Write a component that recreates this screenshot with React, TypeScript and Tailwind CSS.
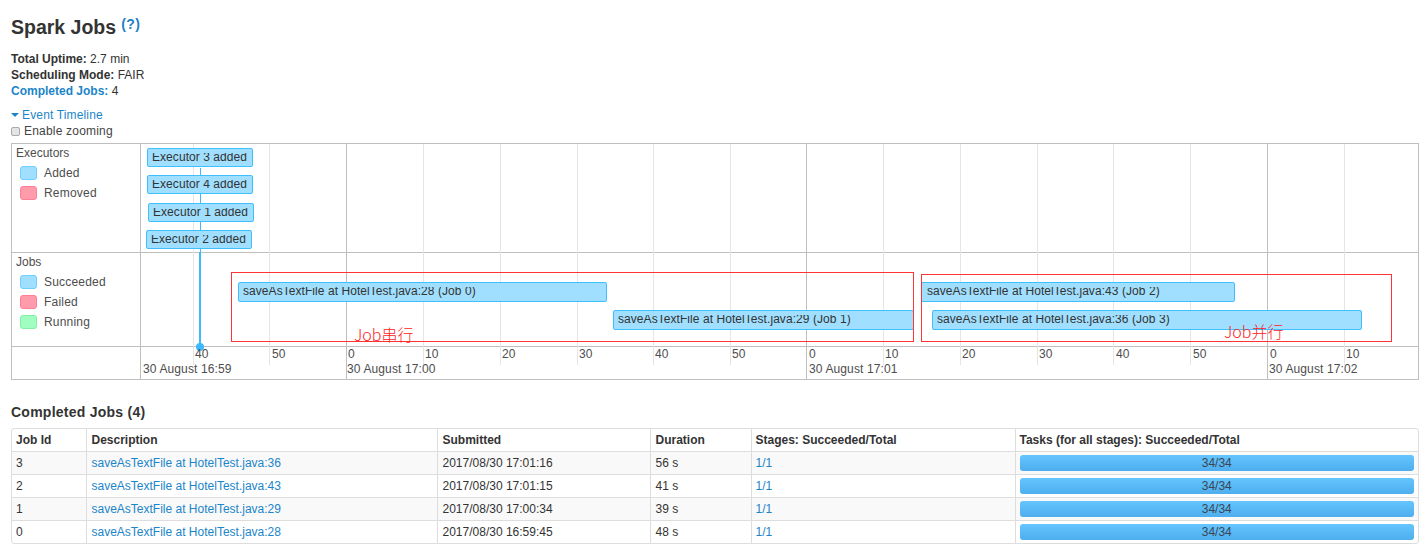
import React from 'react';

const sans = '[font-family:"Liberation_Sans",Arial,sans-serif]';

// canvas origin in the page is x=141, y=144
const OX = 141;
const OY = 144;

const minorLines = [193, 269, 423, 500, 577, 653, 730, 883, 960, 1037, 1113, 1190, 1344];
const majorLines = [346, 806, 1267];

const axisLabels = [
  { x: 195, text: '40' }, { x: 272, text: '50' }, { x: 348, text: '0' }, { x: 425, text: '10' },
  { x: 502, text: '20' }, { x: 579, text: '30' }, { x: 655, text: '40' }, { x: 732, text: '50' },
  { x: 809, text: '0' }, { x: 885, text: '10' }, { x: 962, text: '20' }, { x: 1039, text: '30' },
  { x: 1116, text: '40' }, { x: 1193, text: '50' }, { x: 1270, text: '0' }, { x: 1346, text: '10' },
];

const dateLabels = [
  { x: 143, text: '30 August 16:59' },
  { x: 347, text: '30 August 17:00' },
  { x: 809, text: '30 August 17:01' },
  { x: 1269, text: '30 August 17:02' },
];

const items = [
  { x: 147, y: 148, w: 106, h: 19, pl: 5, text: 'Executor 3 added' },
  { x: 147, y: 175, w: 106, h: 19, pl: 5, text: 'Executor 4 added' },
  { x: 148, y: 203, w: 106, h: 19, pl: 5, text: 'Executor 1 added' },
  { x: 146, y: 230, w: 106, h: 19, pl: 5, text: 'Executor 2 added' },
  { x: 238, y: 282, w: 369, h: 20, pl: 5, text: 'saveAsTextFile at HotelTest.java:28 (Job 0)' },
  { x: 613, y: 310, w: 301, h: 20, pl: 5, text: 'saveAsTextFile at HotelTest.java:29 (Job 1)' },
  { x: 921, y: 282, w: 314, h: 20, pl: 6, text: 'saveAsTextFile at HotelTest.java:43 (Job 2)' },
  { x: 932, y: 310, w: 430, h: 20, pl: 5, text: 'saveAsTextFile at HotelTest.java:36 (Job 3)' },
];

const jobs = [
  { id: 3, line: 36, submitted: '2017/08/30 17:01:16', duration: '56 s' },
  { id: 2, line: 43, submitted: '2017/08/30 17:01:15', duration: '41 s' },
  { id: 1, line: 29, submitted: '2017/08/30 17:00:34', duration: '39 s' },
  { id: 0, line: 28, submitted: '2017/08/30 16:59:45', duration: '48 s' },
];

const LegendRow = ({ label, box }: { label: string; box: string }) => (
  <div className="flex items-center h-[20px] pl-[4px]">
    <span className={`w-[17px] h-[14px] rounded-[3px] border mr-[7px] ${box}`} />
    <span className="tracking-[0.2px]">{label}</span>
  </div>
);

const added = 'bg-[#a0dfff] border-[#6fcfff]';
const removed = 'bg-[#ff9bab] border-[#ff7f96]';
const running = 'bg-[#a0ffc0] border-[#7ff0a4]';

export default function App() {
  return (
    <div className={`${sans} text-[12px] leading-[16px] text-[#333] bg-white w-[1426px] h-[557px] overflow-hidden pl-[11px] pr-[7px]`}>
      <h1 className="pt-[12px] h-[50px] text-[19.5px] leading-[30px] font-bold text-[#333]">
        Spark Jobs
        <sup className="ml-[5px] text-[14px] leading-none tracking-[0.5px] font-semibold text-[#1f7fc4] relative top-[-5px]">(?)</sup>
      </h1>

      <ul className="mt-[1px]">
        <li><strong>Total Uptime:</strong> 2.7 min</li>
        <li><strong>Scheduling Mode:</strong> FAIR</li>
        <li><a className="font-bold text-[#1b85c9]">Completed Jobs:</a> 4</li>
      </ul>

      <div className="mt-[8px] flex items-center text-[#1b85c9] tracking-[0.15px]">
        <span className="w-0 h-0 border-x-[4px] border-x-transparent border-t-[4px] border-t-[#1b85c9] mr-[3px]" />
        Event Timeline
      </div>
      <label className="flex items-center text-[#444] tracking-[0.2px]">
        <span className="w-[9px] h-[9px] rounded-[2px] border border-[#aaa] bg-[#e4e4e4] mr-[4px]" />
        Enable zooming
      </label>

      <div className="relative mt-[4px] h-[237px] border border-[#bfbfbf] text-[#4d4d4d]">
        <div className="flex h-[109px] border-b border-[#bfbfbf]">
          <div className="w-[129px] border-r border-[#bfbfbf] pl-[4px] pt-[1px]">
            <div className="mb-[2px]">Executors</div>
            <LegendRow label="Added" box={added} />
            <LegendRow label="Removed" box={removed} />
          </div>
        </div>
        <div className="flex h-[94px] border-b border-[#bfbfbf]">
          <div className="w-[129px] border-r border-[#bfbfbf] pl-[4px] pt-[1px]">
            <div className="mb-[2px]">Jobs</div>
            <LegendRow label="Succeeded" box={added} />
            <LegendRow label="Failed" box={removed} />
            <LegendRow label="Running" box={running} />
          </div>
        </div>
        <div className="flex h-[32px]">
          <div className="w-[129px] h-full border-r border-[#bfbfbf]" />
        </div>

        {/* vis.js style canvas: everything below sits on the time axis */}
        {minorLines.map((x) => (
          <span key={x} className="absolute top-0 w-px h-[221px] bg-[#e5e5e5]" style={{ left: x - OX + 129 }} />
        ))}
        {majorLines.map((x) => (
          <span key={x} className="absolute top-0 w-px h-full bg-[#bfbfbf]" style={{ left: x - OX + 129 }} />
        ))}

        <span className="absolute left-[188px] top-[24px] w-px h-[180px] bg-[#3eb9ff]" />
        <span className="absolute left-[187px] top-[108px] w-[2px] h-[95px] bg-[#3eb9ff]" />
        <span className="absolute left-[184px] top-[199px] w-[8px] h-[8px] rounded-full bg-[#3eb9ff]" />

        {items.map((it) => (
          <div
            key={it.text}
            className="absolute bg-[#a0dfff] border border-[#3ec0ff] rounded-[2px] text-[#333] tracking-[0.06px] whitespace-nowrap overflow-hidden"
            style={{ left: it.x - OX + 129, top: it.y - OY, width: it.w, height: it.h, paddingLeft: it.pl - 1 }}
          >
            {/* top pixel row of the labels is cut off in the capture */}
            <div className="h-[12px] overflow-hidden mt-[4px]">
              <div className="mt-[-4px]">{it.text}</div>
            </div>
          </div>
        ))}

        {axisLabels.map((l, i) => (
          <span key={i} className="absolute top-[202px] tracking-[0.12px]" style={{ left: l.x - OX + 129 }}>{l.text}</span>
        ))}
        {dateLabels.map((l) => (
          <span key={l.text} className="absolute top-[217px] tracking-[0.12px]" style={{ left: l.x - OX + 129 }}>{l.text}</span>
        ))}

        <div className="absolute left-[219px] top-[128px] w-[683px] h-[70px] border border-[#f33]" />
        <div className="absolute left-[909px] top-[130px] w-[471px] h-[68px] border border-[#f33]" />
        <span className="absolute left-[342px] top-[179px] text-[16px] leading-[22px] font-light text-[#f22] [font-family:'Noto_Sans_CJK_SC',sans-serif]">Job串行</span>
        <span className="absolute left-[1212px] top-[176px] text-[16px] leading-[22px] font-light text-[#f22] [font-family:'Noto_Sans_CJK_SC',sans-serif]">Job并行</span>
      </div>

      <h4 className="mt-[24px] text-[14px] leading-[16px] tracking-[0.25px] font-bold text-[#333]">Completed Jobs (4)</h4>

      <div className="mt-[8px] border border-[#ddd] rounded-[3px] overflow-hidden">
        <table className="w-full table-fixed border-collapse">
          <thead>
            <tr className="h-[22px] font-bold text-left">
              <th className="w-[74px] px-[4px]">Job Id</th>
              <th className="w-[351px] pl-[5px] pr-[4px] border-l border-[#ddd]">Description</th>
              <th className="w-[213px] pl-[5px] pr-[4px] border-l border-[#ddd]">Submitted</th>
              <th className="w-[101px] pl-[5px] pr-[4px] border-l border-[#ddd]">Duration</th>
              <th className="w-[264px] px-[4px] border-l border-[#ddd]">Stages: Succeeded/Total</th>
              <th className="px-[4px] border-l border-[#ddd]">Tasks (for all stages): Succeeded/Total</th>
            </tr>
          </thead>
          <tbody>
            {jobs.map((j, i) => (
              <tr key={j.id} className={`h-[23px] border-t border-[#ddd] ${i % 2 === 0 ? 'bg-[#f9f9f9]' : ''}`}>
                <td className="px-[4px]">{j.id}</td>
                <td className="pl-[5px] pr-[4px] border-l border-[#ddd] text-[#1b85c9]">saveAsTextFile at HotelTest.java:{j.line}</td>
                <td className="pl-[5px] pr-[4px] border-l border-[#ddd]">{j.submitted}</td>
                <td className="pl-[5px] pr-[4px] border-l border-[#ddd]">{j.duration}</td>
                <td className="px-[4px] border-l border-[#ddd] text-[#1b85c9]">1/1</td>
                <td className="px-[4px] border-l border-[#ddd]">
                  <div className="h-[16px] rounded-[3px] bg-gradient-to-b from-[#64c5ff] to-[#4eaeee] text-center leading-[16px] text-[#3a4652]">34/34</div>
                </td>
              </tr>
            ))}
          </tbody>
        </table>
      </div>
    </div>
  );
}
